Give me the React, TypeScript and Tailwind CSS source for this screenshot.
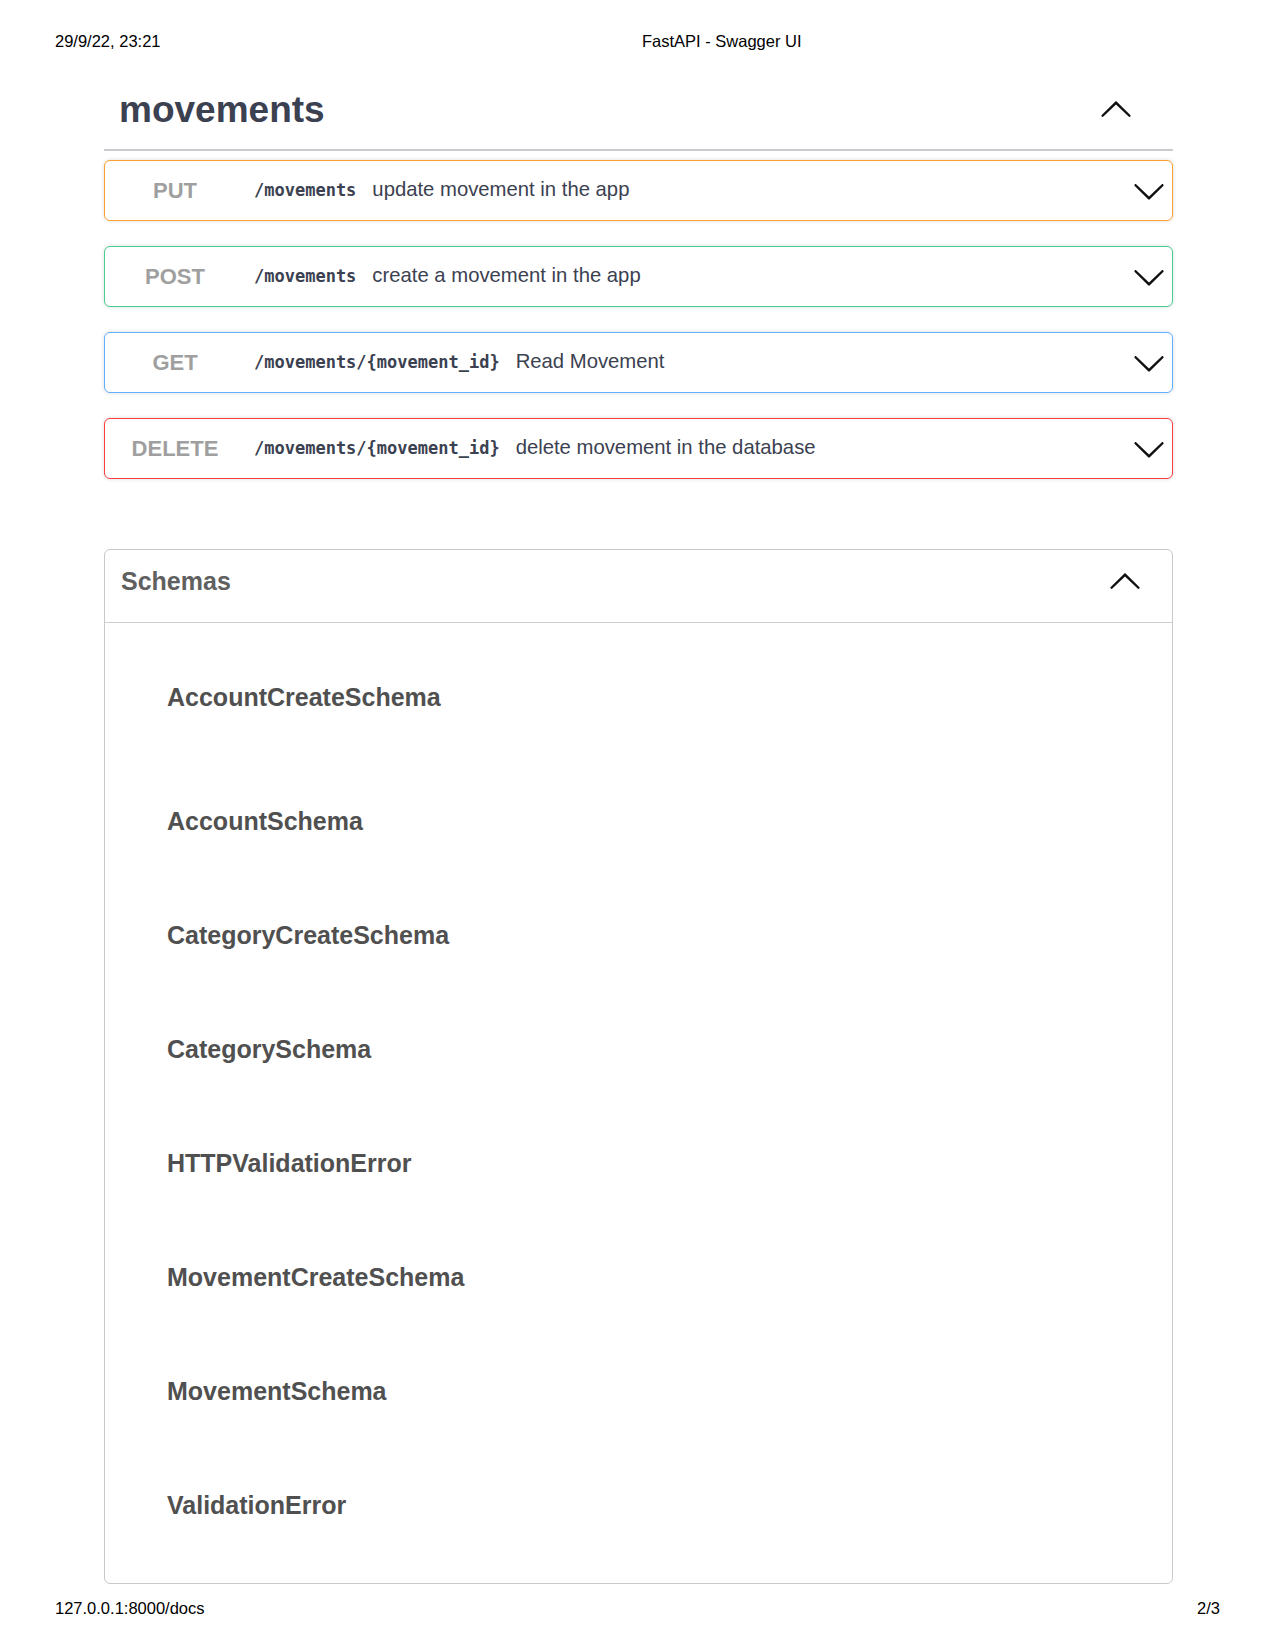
import React from 'react';

type Op = {
  method: string;
  path: string;
  summary: string;
  border: string;
};

const OPS: Op[] = [
  { method: 'PUT', path: '/movements', summary: 'update movement in the app', border: 'border-[#fca130]' },
  { method: 'POST', path: '/movements', summary: 'create a movement in the app', border: 'border-[#49cc90]' },
  { method: 'GET', path: '/movements/{movement_id}', summary: 'Read Movement', border: 'border-[#61affe]' },
  { method: 'DELETE', path: '/movements/{movement_id}', summary: 'delete movement in the database', border: 'border-[#f93e3e]' },
];

const SCHEMAS = [
  'AccountCreateSchema',
  'AccountSchema',
  'CategoryCreateSchema',
  'CategorySchema',
  'HTTPValidationError',
  'MovementCreateSchema',
  'MovementSchema',
  'ValidationError',
];

// swagger's arrow, pointing down; flip it for the open state
const Arrow = ({ up = false }: { up?: boolean }) => (
  <svg
    width="34"
    height="34"
    viewBox="0 0 20 20"
    className={up ? 'rotate-180 shrink-0' : 'shrink-0'}
  >
    <path
      fill="#111"
      d="M17.418 6.109c.272-.268.709-.268.979 0s.271.701 0 .969l-7.908 7.83c-.27.268-.707.268-.979 0l-7.908-7.83c-.27-.268-.27-.701 0-.969.271-.268.709-.268.979 0L10 13.25l7.418-7.141z"
    />
  </svg>
);

const OpBlock = ({ op }: { op: Op }) => (
  <div
    className={`h-[61px] flex items-center border-[1.5px] rounded-[6px] bg-white shadow-[0_0_4px_rgba(0,0,0,0.14)] pl-[8px] pr-[6px] ${op.border}`}
  >
    <span className="w-[124px] text-center text-[22px] font-bold text-[#9f9f9f]">{op.method}</span>
    <span className="pl-[17px] pr-[16px] font-['DejaVu_Sans_Mono',monospace] text-[17px] font-bold text-[#3b4151]">
      {op.path}
    </span>
    <span className="flex-1 text-[20.3px] text-[#3b4151] -mt-[2px]">{op.summary}</span>
    <Arrow />
  </div>
);

const App: React.FC = () => {
  return (
    <div className="w-[1275px] h-[1650px] bg-white flex flex-col font-['Liberation_Sans',Arial,sans-serif] text-black">
      {/* print header */}
      <div className="h-[82px] flex items-center pl-[55px] text-[16.5px]">
        <span className="w-[587px]">29/9/22, 23:21</span>
        <span>FastAPI - Swagger UI</span>
      </div>

      <div className="ml-[104px] w-[1069px] flex flex-col">
        <div className="h-[56px] flex items-center justify-between pl-[15px] pr-[40px]">
          <h3 className="text-[37px] font-bold text-[#3b4151]">movements</h3>
          <Arrow up />
        </div>
        <div className="mt-[11px] h-[1.5px] bg-[#cbcbcf]" />

        <div className="mt-[9.5px] flex flex-col gap-[25px]">
          {OPS.map(op => (
            <OpBlock key={op.method} op={op} />
          ))}
        </div>

        <section className="mt-[70px] border-[1.5px] border-[#c9c9c9] rounded-[6px]">
          <div className="h-[73px] pb-[8px] border-b-[1.5px] border-[#cfcfcf] flex items-center justify-between pl-[16px] pr-[30px]">
            <h4 className="text-[25px] font-bold text-[#606060]">Schemas</h4>
            <Arrow up />
          </div>
          <div className="pt-[18px] pb-[20px] flex flex-col">
            {SCHEMAS.map((name, i) => (
              <div
                key={name}
                className={`h-[114px] flex items-center pl-[62px] text-[25px] font-bold text-[#505050] ${i === 1 ? 'mt-[10px]' : ''}`}
              >
                {name}
              </div>
            ))}
          </div>
        </section>
      </div>

      {/* print footer */}
      <div className="mt-[14px] h-[20px] flex items-center justify-between px-[55px] text-[16.5px]">
        <span>127.0.0.1:8000/docs</span>
        <span>2/3</span>
      </div>
    </div>
  );
};

export default App;
